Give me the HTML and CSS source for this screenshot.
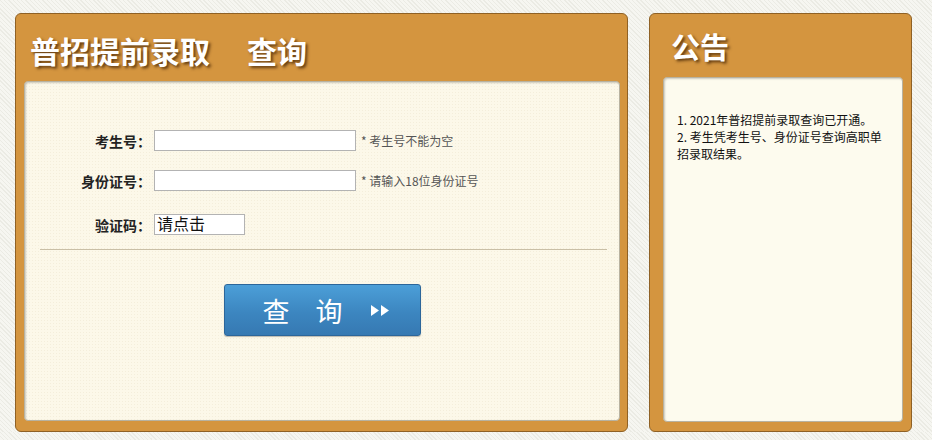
FILE: index.html
```html
<!DOCTYPE html>
<html>
  <head>
    <meta charset="UTF-8" />
    <title>普招提前录取查询</title>
    <link rel="stylesheet" href="styles.css">
  </head>
  <body>
    <div class="wrap">
      <div class="panel main">
        <h1 class="title">普招提前录取<span class="gap">查询</span></h1>
        <div class="inner">
          <form class="query">
            <div class="row">
              <label class="lbl">考生号：</label>
              <input class="field" type="text" />
              <span class="hint">* 考生号不能为空</span>
            </div>
            <div class="row">
              <label class="lbl">身份证号：</label>
              <input class="field" type="text" />
              <span class="hint">* 请输入18位身份证号</span>
            </div>
            <div class="row code-row">
              <label class="lbl">验证码：</label>
              <div class="code">请点击</div>
            </div>
            <hr class="line" />
            <div class="btn-row">
              <button class="btn" type="button">
                <span class="btn-text">查 询</span>
                <svg class="arrows" width="21" height="13" viewBox="0 0 21 13">
                  <path d="M1 1 L9 6.5 L1 12 Z" fill="#fff" />
                  <path d="M11 1 L19 6.5 L11 12 Z" fill="#fff" />
                </svg>
              </button>
            </div>
          </form>
        </div>
      </div>
      <div class="panel side">
        <h1 class="title small">公告</h1>
        <div class="inner notice">
          <p>1. 2021年普招提前录取查询已开通。<br />2. 考生凭考生号、身份证号查询高职单招录取结果。</p>
        </div>
      </div>
    </div>
  </body>
</html>
```

FILE: styles.css
```css
body {
  margin: 0;
  background: repeating-linear-gradient(45deg, #f6f6f1 0, #f6f6f1 2px, #ebebe4 2px, #ebebe4 3px);
  font-family: "Liberation Sans", "Noto Sans CJK SC", sans-serif;
}

.wrap {
  display: flex;
  gap: 21px;
  padding: 13px 0 0 15px;
}

.panel {
  background: #d4953f;
  border: 1px solid #8f6125;
  border-radius: 6px;
  height: 417px;
  box-sizing: content-box;
  display: flex;
  flex-direction: column;
}
.main {
  width: 611px;
}
.side {
  width: 261px;
}

.title {
  margin: 0;
  height: 67px;
  padding-left: 14px;
  box-sizing: border-box;
  font-family: "Noto Sans CJK SC", sans-serif;
  font-size: 30px;
  font-weight: bold;
  line-height: 72px;
  color: #fff;
  text-shadow: 2px 2px 3px rgba(60, 30, 0, 0.75);
}
.title .gap {
  margin-left: 37px;
}
.title.small {
  height: 63px;
  padding-left: 21px;
  font-size: 29px;
  line-height: 64px;
}

.inner {
  flex: 1;
  margin: 0 7px 10px 8px;
  background-color: #fcf8e9;
  background-image: radial-gradient(#f4eedb 0.6px, transparent 0.7px);
  background-size: 3px 3px;
  border: 1px solid #b8b2a0;
  border-radius: 4px;
  box-shadow: inset 1px 1px 2px rgba(0, 0, 0, 0.2);
}
.side .inner {
  margin: 0 8px 9px 13px;
  background: #fdfbee;
}

.query {
  padding-top: 48px;
}
.row {
  display: flex;
  align-items: center;
  height: 21px;
  margin-bottom: 19px;
}
.code-row {
  margin-top: 23px;
  margin-bottom: 14px;
}
.lbl {
  width: 126px;
  text-align: right;
  font-family: "Noto Sans CJK SC", sans-serif;
  font-size: 14px;
  font-weight: bold;
  color: #222;
}
.field {
  width: 202px;
  height: 21px;
  margin: 0 0 0 3px;
  padding: 0 3px;
  box-sizing: border-box;
  border: 1px solid #b3b3b3;
  background: #fff;
}
.hint {
  margin-left: 5px;
  font-family: "Noto Sans CJK SC", sans-serif;
  font-size: 12px;
  color: #555;
}
.code {
  width: 91px;
  height: 21px;
  margin-left: 3px;
  box-sizing: border-box;
  border: 1px solid #b3b3b3;
  background: #fff;
  font-family: "Noto Sans CJK SC", sans-serif;
  font-size: 16px;
  line-height: 17px;
  padding-left: 2px;
  color: #111;
}

.line {
  margin: 0 12px 0 15px;
  border: 0;
  border-top: 1px solid #c9bfa6;
}

.btn-row {
  display: flex;
  justify-content: center;
  padding-top: 34px;
}
.btn {
  width: 197px;
  height: 52px;
  display: flex;
  align-items: center;
  justify-content: flex-start;
  gap: 17px;
  border: 1px solid #2c669a;
  border-radius: 3px;
  background: linear-gradient(#4c9fd8, #3c86c0 55%, #3679b2);
  box-shadow: 0 1px 1px rgba(0, 0, 0, 0.25);
  padding: 0 0 0 38px;
}
.btn-text {
  font-family: "Noto Sans CJK SC", sans-serif;
  font-size: 27px;
  letter-spacing: 10px;
  color: #fff;
}

.notice p {
  margin: 0;
  padding: 33px 14px 0 13px;
  font-family: "Noto Sans CJK SC", sans-serif;
  font-size: 12px;
  line-height: 17px;
  color: #111;
}
```
